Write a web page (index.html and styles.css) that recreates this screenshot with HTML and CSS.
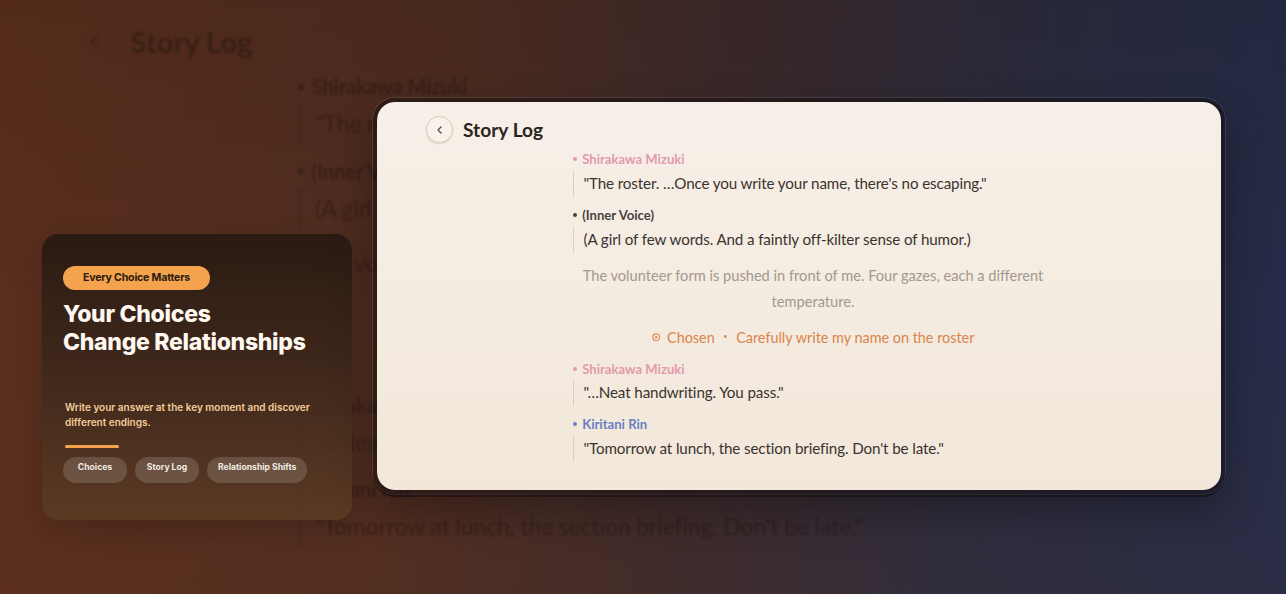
FILE: index.html
```html
<!DOCTYPE html>
<html lang="en">
<head>
    <meta charset="UTF-8">
    <title>Story Log</title>
    <link rel="stylesheet" href="styles.css">
</head>
<body>
<div class="stage">
    <!-- blown-up copy of the log behind everything -->
    <div class="backdrop" aria-hidden="true">
        <div class="log log--backdrop">
            <div class="log-head">
                <span class="back"><svg viewBox="0 0 10 10"><polyline points="6,2 3,5 6,8"/></svg></span>
                <div class="log-title">Story Log</div>
            </div>
            <div class="log-list">
                <div class="line">
                    <p class="speaker mizuki">Shirakawa Mizuki</p>
                    <p class="quote">"The roster. …Once you write your name, there's no escaping."</p>
                </div>
                <div class="line">
                    <p class="speaker inner">(Inner Voice)</p>
                    <p class="quote">(A girl of few words. And a faintly off-kilter sense of humor.)</p>
                </div>
                <p class="narration">The volunteer form is pushed in front of me. Four gazes, each a different temperature.</p>
                <p class="choice"><svg viewBox="0 0 10 10"><circle cx="5" cy="5" r="4"/><circle class="dot" cx="5" cy="5" r="1.4"/></svg>Chosen<span class="sep">•</span>Carefully write my name on the roster</p>
                <div class="line">
                    <p class="speaker mizuki">Shirakawa Mizuki</p>
                    <p class="quote">"…Neat handwriting. You pass."</p>
                </div>
                <div class="line">
                    <p class="speaker rin">Kiritani Rin</p>
                    <p class="quote">"Tomorrow at lunch, the section briefing. Don't be late."</p>
                </div>
            </div>
        </div>
    </div>

    <section class="promo">
        <span class="badge">Every Choice Matters</span>
        <h2 class="promo-title">Your Choices<br>Change Relationships</h2>
        <p class="promo-text">Write your answer at the key moment and discover different endings.</p>
        <div class="bar"></div>
        <div class="pills">
            <span class="pill">Choices</span>
            <span class="pill">Story Log</span>
            <span class="pill">Relationship Shifts</span>
        </div>
    </section>

    <div class="window">
        <div class="log">
            <div class="log-head">
                <button class="back"><svg viewBox="0 0 10 10"><polyline points="6,2 3,5 6,8"/></svg></button>
                <h1 class="log-title">Story Log</h1>
            </div>
            <div class="log-list">
                <div class="line">
                    <p class="speaker mizuki">Shirakawa Mizuki</p>
                    <p class="quote">"The roster. …Once you write your name, there's no escaping."</p>
                </div>
                <div class="line">
                    <p class="speaker inner">(Inner Voice)</p>
                    <p class="quote">(A girl of few words. And a faintly off-kilter sense of humor.)</p>
                </div>
                <p class="narration">The volunteer form is pushed in front of me. Four gazes, each a different temperature.</p>
                <p class="choice"><svg viewBox="0 0 10 10"><circle cx="5" cy="5" r="4"/><circle class="dot" cx="5" cy="5" r="1.4"/></svg>Chosen<span class="sep">•</span>Carefully write my name on the roster</p>
                <div class="line">
                    <p class="speaker mizuki">Shirakawa Mizuki</p>
                    <p class="quote">"…Neat handwriting. You pass."</p>
                </div>
                <div class="line">
                    <p class="speaker rin">Kiritani Rin</p>
                    <p class="quote">"Tomorrow at lunch, the section briefing. Don't be late."</p>
                </div>
            </div>
        </div>
    </div>
</div>
</body>
</html>
```

FILE: styles.css
```css
* {
    margin: 0;
    padding: 0;
    box-sizing: border-box;
}

body {
    width: 1286px;
    height: 594px;
    overflow: hidden;
}

.stage {
    position: relative;
    width: 1286px;
    height: 594px;
    overflow: hidden;
    display: flex;
    align-items: flex-start;
    gap: 21px;
    padding-left: 42px;
    background:
        linear-gradient(180deg, rgba(0, 0, 0, .1) 0%, rgba(0, 0, 0, 0) 55%, rgba(120, 60, 20, .08) 100%),
        linear-gradient(100deg, #5c2f1c 0%, #4f2d22 35%, #3c2a2c 55%, #2b2c40 76%, #252c4a 100%);
}

.backdrop {
    position: absolute;
    left: 0;
    top: 0;
    width: 100%;
    height: 100%;
    z-index: 0;
    filter: blur(1.3px);
}

/* ---------- log page (sized in em so the backdrop can scale it) ---------- */

.log {
    font-family: "Lato", "Noto Sans", sans-serif;
    font-size: 16px;
    color: #3a332f;
    padding: .875em 0 1.75em;
}

.log--backdrop {
    font-size: 24.3px;
    color: #1a0f0b;
    opacity: .4;
}

.log-head {
    display: flex;
    align-items: center;
    gap: .625em;
    padding-left: 3.0625em;
}

.back {
    width: 1.6875em;
    height: 1.6875em;
    border-radius: 50%;
    border: .0625em solid #d9ccbf;
    background: #f8f2eb;
    box-shadow: 0 1px 2px rgba(80, 50, 30, .14);
    display: flex;
    align-items: center;
    justify-content: center;
    font-size: inherit;
}

.back svg {
    width: .625em;
    height: .625em;
    fill: none;
    stroke: #4a3e38;
    stroke-width: 1.2;
    stroke-linecap: round;
    stroke-linejoin: round;
}

.log-title {
    font-size: 1.2em;
    line-height: 1.2;
    font-weight: 700;
    color: #2b2522;
}

.log-list {
    width: 30em;
    margin: .5em 0 0 12.25em;
    display: flex;
    flex-direction: column;
    gap: .625em;
}

.speaker {
    font-size: .82em;
    line-height: 1.22;
    font-weight: 700;
    display: flex;
    align-items: center;
    gap: .4em;
}

.speaker::before {
    content: "";
    width: .3em;
    height: .3em;
    border-radius: 50%;
    background: currentColor;
}

.mizuki { color: #e39aab; }
.inner { color: #4a4340; }
.rin { color: #6a80c2; }

.quote {
    margin-top: .25em;
    border-left: .13em solid #d9cec4;
    padding-left: .625em;
    font-size: .95em;
    line-height: 1.71;
    letter-spacing: -.008em;
}

.narration {
    text-align: center;
    font-size: .915em;
    line-height: 1.78;
    color: #a29990;
}

.choice {
    display: flex;
    align-items: center;
    justify-content: center;
    font-size: .9em;
    line-height: 1.8;
    color: #d9854b;
}

.choice svg {
    width: .58em;
    height: .58em;
    margin-right: .5em;
    fill: none;
    stroke: currentColor;
    stroke-width: 1.2;
}

.choice svg .dot {
    fill: currentColor;
    stroke: none;
}

.choice .sep {
    font-size: .5em;
    margin: 0 1.2em;
}

.log--backdrop .speaker,
.log--backdrop .log-title,
.log--backdrop .narration,
.log--backdrop .choice {
    color: inherit;
}

.log--backdrop .back {
    background: transparent;
    border-color: transparent;
    box-shadow: none;
}

.log--backdrop .back svg {
    stroke: #1a0f0b;
}

.log--backdrop .quote {
    border-left-color: rgba(0, 0, 0, .22);
}

/* ---------- promo card ---------- */

.promo {
    position: relative;
    z-index: 1;
    flex-shrink: 0;
    width: 310px;
    height: 286px;
    margin-top: 234px;
    padding: 31px 21px 0;
    border-radius: 16px;
    font-family: "Inter", "Liberation Sans", sans-serif;
    background: linear-gradient(180deg, rgba(40, 25, 18, .94) 0%, rgba(62, 40, 27, .9) 50%, rgba(92, 59, 36, .9) 100%);
    box-shadow: 0 10px 30px rgba(0, 0, 0, .18);
}

.badge {
    display: inline-block;
    height: 24px;
    padding: 0 20px;
    line-height: 24px;
    border-radius: 12px;
    background: #f4a24d;
    color: #2b1a0e;
    font-size: 10.6px;
    font-weight: 700;
    letter-spacing: -.2px;
}

.promo-title {
    margin-top: 10px;
    font-size: 23px;
    line-height: 28px;
    font-weight: 800;
    letter-spacing: -.3px;
    color: #fff8f0;
}

.promo-text {
    margin: 44px 0 0 2px;
    font-size: 10px;
    line-height: 15px;
    font-weight: 600;
    color: #f3cd9c;
}

.bar {
    width: 54px;
    height: 3px;
    margin: 15px 0 0 2px;
    border-radius: 2px;
    background: #f4a24d;
}

.pills {
    display: flex;
    gap: 8px;
    margin-top: 9px;
}

.pill {
    flex-shrink: 0;
    white-space: nowrap;
    min-width: 64px;
    height: 26px;
    padding: 0 11px;
    line-height: 20px;
    text-align: center;
    border-radius: 13px;
    background: rgba(255, 255, 255, .15);
    color: #f3ebe2;
    font-size: 8.6px;
    font-weight: 700;
}

/* ---------- main window ---------- */

.window {
    position: relative;
    z-index: 1;
    flex-shrink: 0;
    width: 852px;
    margin-top: 98px;
    border: 4px solid rgba(18, 12, 14, .5);
    border-radius: 22px;
    background: linear-gradient(180deg, #f7f0e8 0%, #f2e7da 100%);
    background-clip: padding-box;
    box-shadow: 0 0 0 1px rgba(255, 255, 255, .1), 0 3px 0 rgba(15, 10, 12, .55), 0 18px 40px rgba(0, 0, 0, .3);
}
```
